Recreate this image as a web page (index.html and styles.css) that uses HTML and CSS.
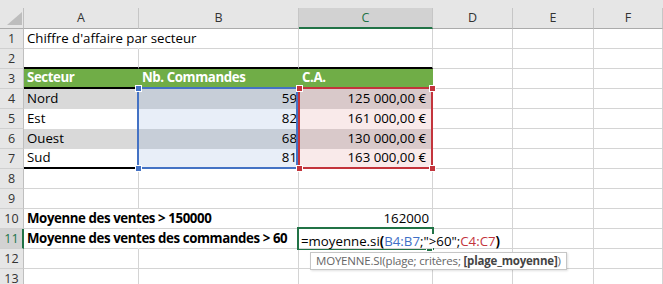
FILE: index.html
```html
<!DOCTYPE html>
<html lang="fr">
<head>
<meta charset="utf-8">
<title>Feuille</title>
<link rel="stylesheet" href="styles.css">
</head>
<body>
<div class="sheet">
  <div class="strip"></div>
  <div class="corner"><svg class="tri" width="15" height="13" viewBox="0 0 15 13"><polygon points="0,13 15,13 15,0" fill="#bdbdbd"/></svg></div>
  <div class="ch">A</div><div class="ch">B</div><div class="ch on">C</div><div class="ch">D</div><div class="ch">E</div><div class="ch">F</div>

  <div class="rh">1</div><div class="c ov">Chiffre d'affaire par secteur</div><div class="c"></div><div class="c"></div><div class="c"></div><div class="c"></div><div class="c"></div>
  <div class="rh">2</div><div class="c tb"></div><div class="c tb"></div><div class="c tb"></div><div class="c"></div><div class="c"></div><div class="c"></div>
  <div class="rh">3</div><div class="c th">Secteur</div><div class="c th">Nb. Commandes</div><div class="c th">C.A.</div><div class="c"></div><div class="c"></div><div class="c"></div>
  <div class="rh">4</div><div class="c t band">Nord</div><div class="c t r bband">59</div><div class="c t r cur rband">125 000,00 €</div><div class="c"></div><div class="c"></div><div class="c"></div>
  <div class="rh">5</div><div class="c t">Est</div><div class="c t r blite">82</div><div class="c t r cur rlite">161 000,00 €</div><div class="c"></div><div class="c"></div><div class="c"></div>
  <div class="rh">6</div><div class="c t band">Ouest</div><div class="c t r bband">68</div><div class="c t r cur rband">130 000,00 €</div><div class="c"></div><div class="c"></div><div class="c"></div>
  <div class="rh">7</div><div class="c t last">Sud</div><div class="c t r blite last">81</div><div class="c t r cur rlite last">163 000,00 €</div><div class="c"></div><div class="c"></div><div class="c"></div>
  <div class="rh">8</div><div class="c"></div><div class="c"></div><div class="c"></div><div class="c"></div><div class="c"></div><div class="c"></div>
  <div class="rh">9</div><div class="c"></div><div class="c"></div><div class="c"></div><div class="c"></div><div class="c"></div><div class="c"></div>
  <div class="rh">10</div><div class="c ov bold">Moyenne des ventes &gt; 150000</div><div class="c"></div><div class="c r num">162000</div><div class="c"></div><div class="c"></div><div class="c"></div>
  <div class="rh on">11</div><div class="c ov bold">Moyenne des ventes des commandes &gt; 60</div><div class="c"></div><div class="c ov fx"><span class="edit">=moyenne.si<b>(</b><span class="refb">B4:B7</span>;"&gt;60";<span class="refr">C4:C7</span><b>)</b></span></div><div class="c"></div><div class="c"></div><div class="c"></div>
  <div class="rh">12</div><div class="c"></div><div class="c"></div><div class="c"></div><div class="c"></div><div class="c"></div><div class="c"></div>
  <div class="rh">13</div><div class="c"></div><div class="c"></div><div class="c"></div><div class="c"></div><div class="c"></div><div class="c"></div>

  <div class="range blue"></div>
  <div class="range red"></div>
  <div class="hdl hb hb1"></div>
  <div class="hdl hb hb2"></div>
  <div class="hdl hr hr1"></div>
  <div class="hdl hr hr2"></div>
  <div class="hdl hr hr3"></div>
  <div class="hdl hr hr4"></div>
  <div class="active"></div>
  <div class="fill"></div>
  <div class="tip">MOYENNE.SI(plage; critères; <b>[plage_moyenne]</b>)</div>
</div>
</body>
</html>
```

FILE: styles.css
```css
html, body {
  margin: 0;
  padding: 0;
  background: #fff;
  overflow: hidden;
}

.sheet {
  position: relative;
  display: grid;
  grid-template-columns: 24px 115px 160px 134px 80px 81px 69px;
  grid-template-rows: 8px 21px repeat(13, 20px);
  width: 663px;
  height: 284px;
  overflow: hidden;
  font-family: "Open Sans", "Noto Sans", sans-serif;
}

.strip {
  grid-column: 1 / -1;
  background: #e6e6e6;
}

.corner {
  background: #e6e6e6;
  border-right: 1px solid #bfbfbf;
  border-bottom: 1px solid #ababab;
  box-sizing: border-box;
  display: flex;
  justify-content: flex-end;
  align-items: flex-end;
  padding: 0 1px 3px 0;
}

.tri { display: block; }

.ch {
  background: #e6e6e6;
  border-right: 1px solid #c6c6c6;
  border-bottom: 1px solid #ababab;
  box-sizing: border-box;
  text-align: center;
  font-size: 12.5px;
  line-height: 20px;
  color: #333;
}

.ch.on {
  background: #d2d2d2;
  color: #217346;
  border-bottom: 2px solid #217346;
}

.rh {
  background: #e6e6e6;
  border-right: 1px solid #bfbfbf;
  border-bottom: 1px solid #d0d0d0;
  box-sizing: border-box;
  text-align: center;
  font-size: 12.5px;
  line-height: 19px;
  color: #333;
}

.rh.on {
  background: #d2d2d2;
  color: #217346;
  border-right: 2px solid #217346;
  padding-left: 1px;
}

.c {
  border-right: 1px solid #d4d4d4;
  border-bottom: 1px solid #d4d4d4;
  box-sizing: border-box;
  font-size: 13.25px;
  line-height: 19px;
  color: #000;
  padding: 0 3px;
  white-space: nowrap;
  display: flex;
  align-items: flex-end;
  min-width: 0;
}

.c.r { justify-content: flex-end; padding: 0 1px 0 0; }
.c.cur { padding-right: 6px; }
.c.num { padding-right: 3px; }

.c.ov { border-right-color: transparent; overflow: visible; }

.bold { font-weight: 700; letter-spacing: -0.4px; }

.c.tb { border-bottom: 2px solid #000; }

.c.th {
  background: #70ad47;
  color: #fff;
  font-weight: 700;
  letter-spacing: -0.4px;
  border-right-color: #70ad47;
  border-bottom: 2px solid #000;
}

.c.t { border-color: transparent; }
.c.band { background: #d9d9d9; }
.c.bband { background: #c7ced8; }
.c.blite { background: #e8eef8; }
.c.rband { background: #d9c9ca; }
.c.rlite { background: #f9eaea; }
.c.last { border-bottom: 2px solid #000; }

.fx {
  padding-left: 2px;
  position: relative;
  z-index: 2;
}

.edit {
  display: inline-block;
  line-height: 14px;
  background: #fff;
  padding-right: 1px;
}

.fx b { font-weight: 700; }
.refb { color: #3f6fc6; }
.refr { color: #c3343c; }

.range {
  position: absolute;
  box-sizing: border-box;
  border: 2px solid;
}

.range.blue {
  left: 137px;
  top: 87px;
  width: 161px;
  height: 82px;
  border-color: #4472c4;
}

.range.red {
  left: 298px;
  top: 87px;
  width: 135px;
  height: 82px;
  border-color: #c3343c;
}

.hdl {
  position: absolute;
  width: 5px;
  height: 5px;
  border: 1px solid #fff;
}

.hb { background: #4472c4; }
.hr { background: #c3343c; }
.hb1 { left: 135px; top: 85px; }
.hb2 { left: 135px; top: 165px; }
.hr1 { left: 296px; top: 85px; }
.hr2 { left: 296px; top: 165px; }
.hr3 { left: 429px; top: 85px; }
.hr4 { left: 429px; top: 165px; }

.active {
  position: absolute;
  left: 297px;
  top: 227px;
  width: 137px;
  height: 23px;
  box-sizing: border-box;
  border: 2px solid #217346;
}

.fill {
  position: absolute;
  left: 426px;
  top: 245px;
  width: 5px;
  height: 5px;
  background: #217346;
  border: 1px solid #fff;
}

.tip {
  position: absolute;
  z-index: 3;
  left: 310px;
  top: 252px;
  width: 257px;
  height: 18px;
  box-sizing: border-box;
  background: #fff;
  border: 1px solid #c6c6c6;
  box-shadow: 1px 1px 2px rgba(0, 0, 0, 0.12);
  padding: 0 0 0 5px;
  font-size: 11.5px;
  letter-spacing: -0.2px;
  line-height: 16px;
  color: #666;
  white-space: nowrap;
  overflow: hidden;
}

.tip b { color: #444; font-weight: 700; }
```
